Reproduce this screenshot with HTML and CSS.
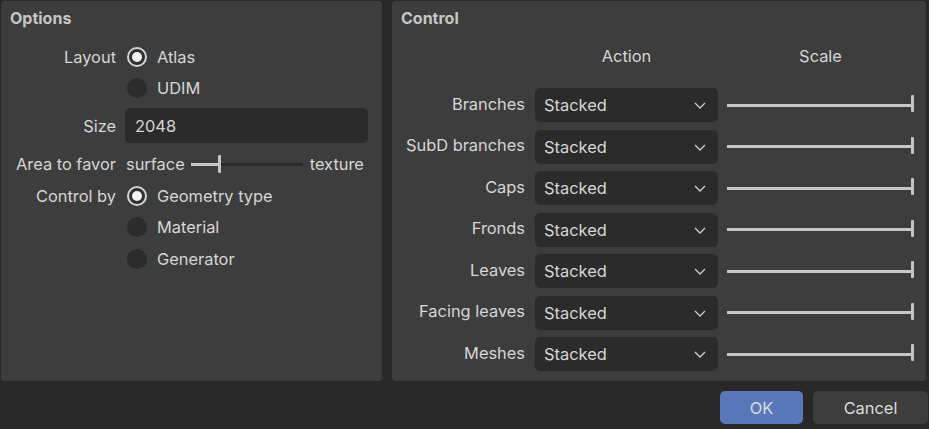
FILE: index.html
```html
<!DOCTYPE html>
<html>
<head>
<meta charset="utf-8">
<link rel="stylesheet" href="styles.css">
</head>
<body>
<div class="dialog">
  <div class="panels">
    <section class="panel options">
      <div class="title">Options</div>
      <div class="opt-grid">
        <div class="lbl r-layout">Layout</div>
        <div class="ctl r-layout"><span class="radio on"></span><span>Atlas</span></div>
        <div class="lbl r-udim"></div>
        <div class="ctl r-udim"><span class="radio"></span><span>UDIM</span></div>
        <div class="lbl r-size">Size</div>
        <div class="ctl r-size"><div class="input">2048</div></div>
        <div class="lbl r-area">Area to favor</div>
        <div class="ctl r-area favor">
          <span>surface</span>
          <div class="mini-slider"><div class="mini-fill"></div><div class="mini-handle"></div><div class="mini-rest"></div></div>
          <span>texture</span>
        </div>
        <div class="lbl r-ctrl">Control by</div>
        <div class="ctl r-ctrl"><span class="radio on"></span><span>Geometry type</span></div>
        <div class="lbl r-ctrl"></div>
        <div class="ctl r-ctrl"><span class="radio"></span><span>Material</span></div>
        <div class="lbl r-ctrl"></div>
        <div class="ctl r-ctrl"><span class="radio"></span><span>Generator</span></div>
      </div>
    </section>
    <section class="panel control">
      <div class="title">Control</div>
      <div class="ctrl-head">
        <div></div>
        <div class="col-h">Action</div>
        <div class="col-h">Scale</div>
      </div>
      <div class="ctrl-grid">
        <div class="clbl">Branches</div>
        <div class="select"><span>Stacked</span><svg class="chev" width="12" height="7" viewBox="0 0 12 7"><path d="M1 1 L6 6 L11 1" fill="none" stroke="#cfcfcf" stroke-width="1.3"/></svg></div>
        <div class="slider"><div class="track"></div><div class="handle"></div></div>

        <div class="clbl">SubD branches</div>
        <div class="select"><span>Stacked</span><svg class="chev" width="12" height="7" viewBox="0 0 12 7"><path d="M1 1 L6 6 L11 1" fill="none" stroke="#cfcfcf" stroke-width="1.3"/></svg></div>
        <div class="slider"><div class="track"></div><div class="handle"></div></div>

        <div class="clbl">Caps</div>
        <div class="select"><span>Stacked</span><svg class="chev" width="12" height="7" viewBox="0 0 12 7"><path d="M1 1 L6 6 L11 1" fill="none" stroke="#cfcfcf" stroke-width="1.3"/></svg></div>
        <div class="slider"><div class="track"></div><div class="handle"></div></div>

        <div class="clbl">Fronds</div>
        <div class="select"><span>Stacked</span><svg class="chev" width="12" height="7" viewBox="0 0 12 7"><path d="M1 1 L6 6 L11 1" fill="none" stroke="#cfcfcf" stroke-width="1.3"/></svg></div>
        <div class="slider"><div class="track"></div><div class="handle"></div></div>

        <div class="clbl">Leaves</div>
        <div class="select"><span>Stacked</span><svg class="chev" width="12" height="7" viewBox="0 0 12 7"><path d="M1 1 L6 6 L11 1" fill="none" stroke="#cfcfcf" stroke-width="1.3"/></svg></div>
        <div class="slider"><div class="track"></div><div class="handle"></div></div>

        <div class="clbl">Facing leaves</div>
        <div class="select"><span>Stacked</span><svg class="chev" width="12" height="7" viewBox="0 0 12 7"><path d="M1 1 L6 6 L11 1" fill="none" stroke="#cfcfcf" stroke-width="1.3"/></svg></div>
        <div class="slider"><div class="track"></div><div class="handle"></div></div>

        <div class="clbl">Meshes</div>
        <div class="select"><span>Stacked</span><svg class="chev" width="12" height="7" viewBox="0 0 12 7"><path d="M1 1 L6 6 L11 1" fill="none" stroke="#cfcfcf" stroke-width="1.3"/></svg></div>
        <div class="slider"><div class="track"></div><div class="handle"></div></div>
      </div>
    </section>
  </div>
  <div class="buttons">
    <button class="btn ok">OK</button>
    <button class="btn cancel">Cancel</button>
  </div>
</div>
</body>
</html>
```

FILE: styles.css
```css
* { box-sizing: border-box; }
html, body {
  margin: 0;
  padding: 0;
  background: #282828;
  width: 929px;
  height: 429px;
  overflow: hidden;
}
body {
  font-family: Inter, "Noto Sans", sans-serif;
  font-size: 16.4px;
  color: #d6d6d6;
}
.dialog {
  display: flex;
  flex-direction: column;
}
.panels {
  display: flex;
  gap: 10px;
  padding: 1px 3px 0 1px;
}
.panel {
  background: #3d3d3d;
  border-radius: 4px;
  height: 380px;
}
.options {
  width: 381px;
  padding: 7px 9px;
}
.control {
  width: 534px;
  padding: 7px 13px 8px 9px;
}
.title {
  font-weight: 700;
  font-size: 16px;
  line-height: 20px;
  color: #c6c6c6;
}
.opt-grid {
  margin-top: 13.5px;
  display: grid;
  grid-template-columns: 106px 244px;
  column-gap: 10px;
}
.lbl {
  text-align: right;
  display: flex;
  align-items: center;
  justify-content: flex-end;
}
.ctl {
  display: flex;
  align-items: center;
}
.r-layout, .r-udim { height: 31px; }
.r-size { height: 35px; margin-top: 4.5px; }
.r-area { height: 32px; margin-top: 5px; }
.r-ctrl { height: 31.5px; }
.radio {
  width: 20px;
  height: 20px;
  border-radius: 50%;
  background: #2c2c2c;
  margin-left: 1px;
  margin-right: 10px;
  flex: none;
  position: relative;
}
.radio.on {
  border: 2px solid #d4d4d4;
  background: #303030;
}
.radio.on::after {
  content: "";
  position: absolute;
  left: 3px;
  top: 3px;
  width: 10px;
  height: 10px;
  border-radius: 50%;
  background: #f2f2f2;
}
.input {
  width: 243px;
  height: 35px;
  margin-left: -1px;
  background: #2b2b2b;
  border-radius: 5px;
  padding-left: 10px;
  display: flex;
  align-items: center;
}
.mini-slider {
  display: flex;
  align-items: center;
  width: 112px;
  height: 18px;
  margin: 0 7px 0 6px;
}
.mini-fill {
  width: 27px;
  height: 3px;
  background: #c8c8c8;
}
.mini-handle {
  width: 3px;
  height: 18px;
  background: #c4c4c4;
  border-radius: 1px;
}
.mini-rest {
  flex: 1;
  height: 3px;
  background: #2c2c2c;
}
.ctrl-head {
  display: grid;
  grid-template-columns: 124px 183px 186px;
  column-gap: 10px;
  margin-top: 18px;
  height: 20px;
  line-height: 20px;
}
.ctrl-head > div:nth-child(3) { margin-left: -1px; }
.col-h {
  text-align: center;
}
.ctrl-grid {
  margin-top: 22px;
  display: grid;
  grid-template-columns: 124px 183px 186px;
  grid-auto-rows: 34px;
  column-gap: 10px;
  row-gap: 7.5px;
}
.ctrl-grid .slider { margin-left: -1px; }
.clbl {
  display: flex;
  align-items: center;
  justify-content: flex-end;
  padding-bottom: 3px;
}
.select {
  background: #2b2b2b;
  border-radius: 5px;
  display: flex;
  align-items: center;
  justify-content: space-between;
  padding: 0 12px 0 9px;
}
.chev { display: block; margin-top: 1px; }
.slider {
  display: flex;
  align-items: center;
}
.track {
  flex: 1;
  height: 3px;
  background: #c8c8c8;
}
.handle {
  width: 3px;
  height: 17px;
  border-radius: 1px;
  background: #c4c4c4;
  margin-top: -3px;
}
.buttons {
  display: flex;
  justify-content: flex-end;
  gap: 10px;
  padding: 10px 1px 0 0;
}
.btn {
  font-family: Inter, "Noto Sans", sans-serif;
  font-size: 16.4px;
  color: #dcdcdc;
  border: none;
  border-radius: 5px;
  height: 33px;
  padding: 0;
}
.ok {
  width: 83px;
  background: #5a77bb;
}
.cancel {
  width: 115px;
  background: #3d3d3d;
}
```
